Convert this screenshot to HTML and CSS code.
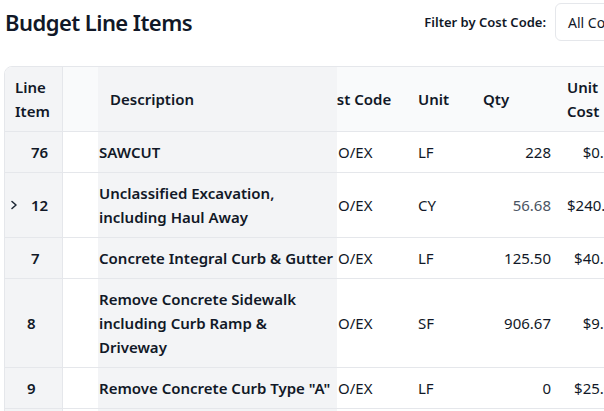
FILE: index.html
```html
<!DOCTYPE html>
<html lang="en">
<head>
<meta charset="utf-8">
<title>Budget Line Items</title>
<link rel="stylesheet" href="styles.css">
</head>
<body>
<div class="page">
  <header class="toolbar">
    <h1 class="title">Budget Line Items</h1>
    <div class="filter">
      <label class="filter-label" for="cc">Filter by Cost Code:</label>
      <div class="select" id="cc">All Cost Codes</div>
    </div>
  </header>

  <div class="table-wrap">
    <table class="grid">
      <thead>
        <tr>
          <th class="c-line">Line<br>Item</th>
          <th class="c-exp"></th>
          <th class="c-desc">Description</th>
          <th class="c-code"><span class="code-clip">Cost Code</span></th>
          <th class="c-unit">Unit</th>
          <th class="c-qty">Qty</th>
          <th class="c-cost">Unit<br>Cost</th>
        </tr>
      </thead>
      <tbody>
        <tr>
          <td class="c-line"><span class="num">76</span></td>
          <td class="c-exp"></td>
          <td class="c-desc">SAWCUT</td>
          <td class="c-code">O/EX</td>
          <td class="c-unit">LF</td>
          <td class="c-qty">228</td>
          <td class="c-cost">$0.85</td>
        </tr>
        <tr>
          <td class="c-line"><span class="num"><svg class="chev" width="8" height="10" viewBox="0 0 8 10"><polyline points="2,1.5 6,5 2,8.5" fill="none" stroke="#1f2937" stroke-width="1.6" stroke-linecap="round" stroke-linejoin="round"/></svg>12</span></td>
          <td class="c-exp"></td>
          <td class="c-desc">Unclassified Excavation,<br>including Haul Away</td>
          <td class="c-code">O/EX</td>
          <td class="c-unit">CY</td>
          <td class="c-qty muted">56.68</td>
          <td class="c-cost">$240.00</td>
        </tr>
        <tr>
          <td class="c-line"><span class="num">7</span></td>
          <td class="c-exp"></td>
          <td class="c-desc">Concrete Integral Curb &amp; Gutter</td>
          <td class="c-code">O/EX</td>
          <td class="c-unit">LF</td>
          <td class="c-qty">125.50</td>
          <td class="c-cost">$40.00</td>
        </tr>
        <tr>
          <td class="c-line"><span class="num shallow">8</span></td>
          <td class="c-exp"></td>
          <td class="c-desc">Remove Concrete Sidewalk<br>including Curb Ramp &amp;<br>Driveway</td>
          <td class="c-code">O/EX</td>
          <td class="c-unit">SF</td>
          <td class="c-qty">906.67</td>
          <td class="c-cost">$9.50</td>
        </tr>
        <tr>
          <td class="c-line"><span class="num shallow">9</span></td>
          <td class="c-exp"></td>
          <td class="c-desc">Remove Concrete Curb Type "A"</td>
          <td class="c-code">O/EX</td>
          <td class="c-unit">LF</td>
          <td class="c-qty">0</td>
          <td class="c-cost">$25.00</td>
        </tr>
        <tr>
          <td class="c-line"><span class="num shallow">10</span></td>
          <td class="c-exp"></td>
          <td class="c-desc">Remove Asphalt Pavement</td>
          <td class="c-code">O/EX</td>
          <td class="c-unit">SF</td>
          <td class="c-qty">1,200</td>
          <td class="c-cost">$3.00</td>
        </tr>
      </tbody>
    </table>
  </div>
</div>
</body>
</html>
```

FILE: styles.css
```css
* { box-sizing: border-box; }

html, body {
  margin: 0;
  padding: 0;
  overflow: hidden;
  background: #ffffff;
}

body {
  font-family: "Noto Sans", "Open Sans", Arial, sans-serif;
  color: #111827;
  font-size: 15px;
}

.page {
  width: 720px;
  padding: 0 0 0 4px;
}

.toolbar {
  display: flex;
  align-items: center;
  height: 44px;
  margin-bottom: 22px;
  white-space: nowrap;
}

.title {
  flex: none;
  margin: 0 0 0 1px;
  font-size: 22px;
  font-weight: 600;
  line-height: 32px;
  letter-spacing: -0.55px;
  color: #111827;
}

.filter {
  flex: none;
  display: flex;
  align-items: center;
  gap: 9px;
  margin-left: auto;
  margin-right: 5px;
}

.filter-label {
  font-size: 13px;
  font-weight: 600;
  color: #111827;
}

.select {
  height: 38px;
  width: 160px;
  padding: 0 12px;
  display: flex;
  align-items: center;
  border: 1px solid #e5e7eb;
  border-radius: 6px;
  background: #ffffff;
  font-size: 14px;
  color: #111827;
}

.table-wrap {
  width: 690px;
  border: 1px solid #e5e7eb;
  border-radius: 8px 8px 0 0;
  overflow: hidden;
}

.grid {
  border-collapse: separate;
  border-spacing: 0;
  table-layout: fixed;
  width: 630px;
}

.grid th,
.grid td {
  padding: 8px;
  line-height: 24px;
  border-bottom: 1px solid #e5e7eb;
  vertical-align: middle;
  text-align: left;
  white-space: nowrap;
}

.grid th {
  background: #f9fafb;
  font-weight: 600;
  font-size: 15px;
}

.grid td {
  font-weight: 400;
  background: #ffffff;
}

.c-line { width: 58px; }
.c-exp { width: 35px; }
.c-desc { width: 239px; }
.c-code { width: 73px; }
.c-unit { width: 65px; }
.c-qty { width: 84px; }
.c-cost { width: 76px; }

.grid th.c-line {
  padding-left: 10px;
  background: #f3f4f6;
  border-right: 1px solid #e5e7eb;
}

.grid td.c-line {
  padding-left: 0;
  padding-right: 0;
  background: #f3f4f6;
  border-right: 1px solid #e5e7eb;
  font-weight: 600;
}

.num {
  display: flex;
  align-items: center;
  padding-left: 26px;
  position: relative;
}

.num.shallow { padding-left: 22px; }

.chev {
  position: absolute;
  left: 5px;
  top: 7px;
}

.grid th.c-desc {
  background: #f3f4f6;
  padding-left: 12px;
}

.grid td.c-desc {
  background: #f3f4f6;
  padding-left: 1px;
  font-weight: 600;
}

.grid th.c-code,
.grid td.c-code {
  padding-left: 1px;
  overflow: hidden;
}

.code-clip {
  display: block;
  margin-left: -20px;
}

.grid td.c-qty {
  text-align: right;
}

.grid td.c-cost {
  text-align: right;
  padding-right: 14px;
}

.muted { color: #4b5563; }
```
